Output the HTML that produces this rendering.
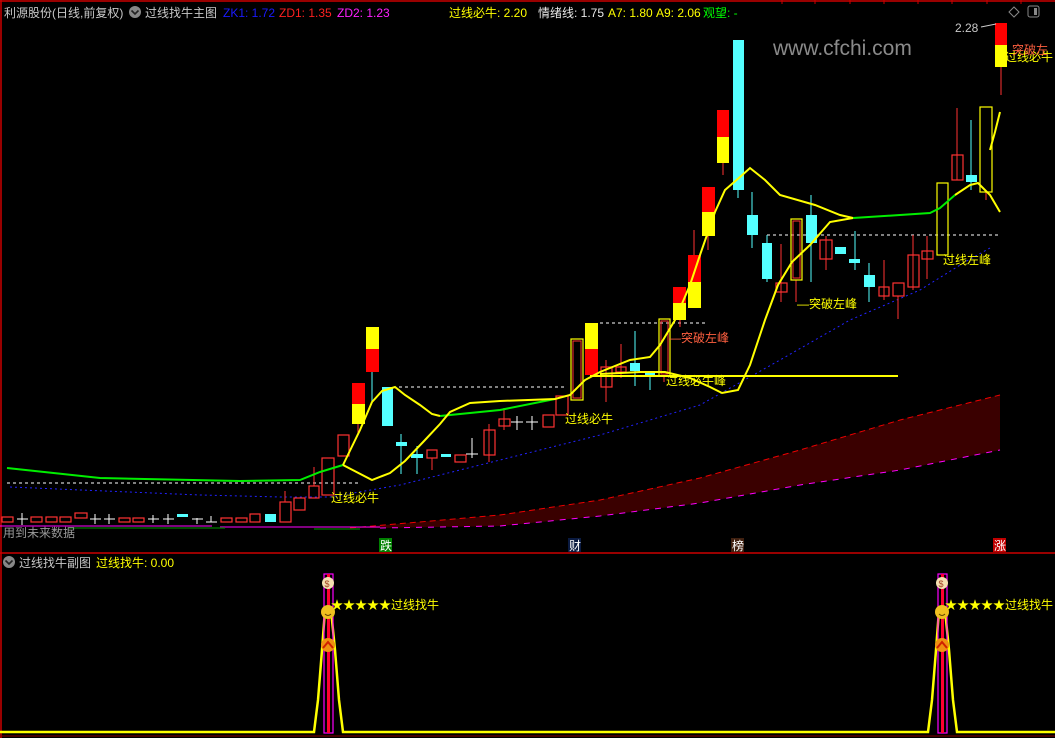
<!DOCTYPE html>
<html><head><meta charset="utf-8"><style>
html,body{margin:0;padding:0;background:#000;}
svg{display:block;font-family:"Liberation Sans","Noto Sans CJK SC",sans-serif;}
</style></head><body>
<svg width="1055" height="738" viewBox="0 0 1055 738" xmlns="http://www.w3.org/2000/svg">
<rect width="1055" height="738" fill="#000"/>
<line x1="0" y1="1" x2="1055" y2="1" stroke="#c00" stroke-width="1.5"/>
<line x1="1" y1="0" x2="1" y2="738" stroke="#c00" stroke-width="1.5"/>
<line x1="0" y1="553" x2="1055" y2="553" stroke="#c00" stroke-width="1.5"/>
<line x1="0" y1="736" x2="1055" y2="736" stroke="#800" stroke-width="1"/>
<g stroke="#c00"><line x1="782" y1="0" x2="782" y2="4"/><line x1="815" y1="0" x2="815" y2="4"/><line x1="850" y1="0" x2="850" y2="4"/><line x1="884" y1="0" x2="884" y2="4"/><line x1="918" y1="0" x2="918" y2="4"/><line x1="952" y1="0" x2="952" y2="4"/><line x1="987" y1="0" x2="987" y2="4"/><line x1="1021" y1="0" x2="1021" y2="4"/></g>

<g font-size="12">
<text x="4" y="17" fill="#c8c8c8">利源股份(日线,前复权)</text>
<text x="145" y="17" fill="#c8c8c8">过线找牛主图</text>
<text x="223" y="17" fill="#1a1aff">ZK1: 1.72</text>
<text x="279" y="17" fill="#ff2020">ZD1: 1.35</text>
<text x="337" y="17" fill="#ff20ff">ZD2: 1.23</text>
<text x="449" y="17" fill="#ffff00">过线必牛: 2.20</text>
<text x="538" y="17" fill="#e8e8e8">情绪线: 1.75</text>
<text x="608" y="17" fill="#ffff00">A7: 1.80</text>
<text x="656" y="17" fill="#ffff00">A9: 2.06</text>
<text x="703" y="17" fill="#00ff00">观望: -</text>
</g>
<circle cx="135" cy="12" r="6" fill="#888"/><path d="M131.5 10.5 L135 14 L138.5 10.5" stroke="#222" stroke-width="1.6" fill="none"/>
<path d="M1014 7 L1019 12 L1014 17 L1009 12 Z" stroke="#888" fill="none"/>
<rect x="1028" y="6" width="11" height="11" rx="2" stroke="#888" fill="none"/><rect x="1034" y="8" width="3" height="7" fill="#888"/>
<text x="773" y="55" font-size="21" fill="#8a8a8a">www.cfchi.com</text>

<polygon points="350,528 500,515 600,500 700,478 800,450 900,420 1000,395 1000,450 900,470 800,485 700,503 600,516 500,526 380,528" fill="#3a0000"/>
<polyline points="350,528 500,515 600,500 700,478 800,450 900,420 1000,395" fill="none" stroke="#e00" stroke-dasharray="6,4"/>
<polyline points="380,528 500,526 600,516 700,503 800,485 900,470 1000,450" fill="none" stroke="#f0f" stroke-dasharray="6,6"/>
<line x1="0" y1="526" x2="212" y2="526" stroke="#f0f"/>
<line x1="220" y1="527" x2="380" y2="527" stroke="#f0f"/>
<line x1="68" y1="528" x2="225" y2="528" stroke="#060" stroke-width="1.5"/>
<line x1="314" y1="529" x2="360" y2="529" stroke="#060" stroke-width="1.5"/>

<g stroke="#fff" stroke-dasharray="3,3">
<line x1="7" y1="483" x2="358" y2="483"/><line x1="393" y1="387" x2="565" y2="387"/>
<line x1="600" y1="323" x2="708" y2="323"/><line x1="767" y1="235" x2="998" y2="235"/>
</g>
<polyline points="10,487 200,495 280,497 330,497 400,485 500,460 600,435 700,405 780,360 850,320 920,290 965,262 990,248" fill="none" stroke="#2222ff" stroke-dasharray="2,3"/>

<g stroke="#ff3232" stroke-width="1">
<line x1="285" y1="491" x2="285" y2="502"/><line x1="314" y1="467" x2="314" y2="486"/>
<line x1="358" y1="424" x2="358" y2="433"/><line x1="432" y1="458" x2="432" y2="470"/>
<line x1="489" y1="424" x2="489" y2="462"/><line x1="504" y1="408" x2="504" y2="430"/>
<line x1="606" y1="360" x2="606" y2="402"/><line x1="621" y1="344" x2="621" y2="378"/>
<line x1="680" y1="320" x2="680" y2="327"/><line x1="694" y1="230" x2="694" y2="255"/>
<line x1="708" y1="235" x2="708" y2="250"/><line x1="723" y1="163" x2="723" y2="175"/>
<line x1="781" y1="244" x2="781" y2="302"/><line x1="796" y1="280" x2="796" y2="302"/>
<line x1="826" y1="236" x2="826" y2="270"/><line x1="884" y1="260" x2="884" y2="300"/>
<line x1="898" y1="296" x2="898" y2="319"/><line x1="913" y1="235" x2="913" y2="290"/>
<line x1="927" y1="236" x2="927" y2="279"/><line x1="957" y1="108" x2="957" y2="180"/>
<line x1="1001" y1="67" x2="1001" y2="95"/><line x1="986" y1="190" x2="986" y2="200"/>
<line x1="664" y1="376" x2="664" y2="382"/>
</g>
<g stroke="#54ffff" stroke-width="1">
<line x1="372" y1="372" x2="372" y2="402"/><line x1="401" y1="434" x2="401" y2="474"/>
<line x1="417" y1="446" x2="417" y2="474"/><line x1="635" y1="331" x2="635" y2="386"/>
<line x1="650" y1="372" x2="650" y2="390"/><line x1="738" y1="190" x2="738" y2="198"/>
<line x1="752" y1="192" x2="752" y2="248"/><line x1="767" y1="235" x2="767" y2="282"/>
<line x1="811" y1="195" x2="811" y2="282"/><line x1="855" y1="231" x2="855" y2="270"/>
<line x1="869" y1="263" x2="869" y2="302"/><line x1="971" y1="120" x2="971" y2="190"/>
</g>
<g stroke="#fff" stroke-width="1">
<line x1="472" y1="438" x2="472" y2="458"/><line x1="466" y1="454" x2="478" y2="454"/>
<line x1="517" y1="416" x2="517" y2="430"/><line x1="511" y1="422" x2="523" y2="422"/>
<line x1="532" y1="416" x2="532" y2="430"/><line x1="526" y1="422" x2="538" y2="422"/>
<line x1="22" y1="513" x2="22" y2="525"/><line x1="17" y1="519" x2="28" y2="519"/>
<line x1="95" y1="514" x2="95" y2="524"/><line x1="90" y1="519" x2="101" y2="519"/>
<line x1="109" y1="514" x2="109" y2="524"/><line x1="104" y1="519" x2="115" y2="519"/>
<line x1="153" y1="515" x2="153" y2="523"/><line x1="148" y1="519" x2="159" y2="519"/>
<line x1="168" y1="514" x2="168" y2="524"/><line x1="163" y1="519" x2="174" y2="519"/>
<line x1="197" y1="518" x2="197" y2="524"/><line x1="192" y1="519" x2="203" y2="519"/>
<line x1="211" y1="516" x2="211" y2="522"/><line x1="206" y1="522" x2="217" y2="522"/>
</g>
<g fill="none" stroke="#ff3232" stroke-width="1.2">
<rect x="2" y="517" width="11" height="5"/><rect x="31" y="517" width="11" height="5"/>
<rect x="46" y="517" width="11" height="5"/><rect x="60" y="517" width="11" height="5"/>
<rect x="75" y="513" width="12" height="5"/><rect x="119" y="518" width="11" height="4"/>
<rect x="133" y="518" width="11" height="4"/><rect x="221" y="518" width="11" height="4"/>
<rect x="236" y="518" width="11" height="4"/><rect x="250" y="514" width="10" height="8"/>
<rect x="280" y="502" width="11" height="20"/><rect x="294" y="498" width="11" height="12"/>
<rect x="309" y="486" width="10" height="12"/><rect x="322" y="458" width="12" height="37"/>
<rect x="338" y="435" width="11" height="21"/><rect x="427" y="450" width="10" height="8"/>
<rect x="455" y="455" width="11" height="7"/><rect x="484" y="430" width="11" height="25"/>
<rect x="499" y="419" width="11" height="7"/><rect x="543" y="415" width="11" height="12"/>
<rect x="556" y="396" width="12" height="19"/><rect x="601" y="367" width="11" height="20"/>
<rect x="616" y="367" width="10" height="5"/><rect x="776" y="283" width="11" height="9"/>
<rect x="820" y="240" width="12" height="19"/><rect x="879" y="287" width="10" height="9"/>
<rect x="893" y="283" width="11" height="13"/><rect x="908" y="255" width="11" height="32"/>
<rect x="922" y="251" width="11" height="8"/><rect x="952" y="155" width="11" height="25"/>
</g>
<g fill="none" stroke="#ffff00" stroke-width="1.2">
<rect x="571" y="339" width="12" height="61"/><rect x="659" y="319" width="11" height="57"/>
<rect x="791" y="219" width="11" height="61"/><rect x="937" y="183" width="11" height="72"/>
<rect x="980" y="107" width="12" height="85"/>
</g>
<g fill="none" stroke="#ff3232" stroke-width="1"><rect x="573" y="341" width="8" height="57"/><rect x="661" y="321" width="7" height="53"/><rect x="793" y="221" width="7" height="57"/></g>
<g fill="#54ffff">
<rect x="177" y="514" width="11" height="3"/><rect x="265" y="514" width="11" height="8"/>
<rect x="382" y="387" width="11" height="39"/><rect x="396" y="442" width="11" height="4"/>
<rect x="411" y="454" width="12" height="4"/><rect x="441" y="454" width="10" height="3"/>
<rect x="630" y="363" width="10" height="8"/><rect x="645" y="372" width="10" height="3"/>
<rect x="733" y="40" width="11" height="150"/><rect x="747" y="215" width="11" height="20"/>
<rect x="762" y="243" width="10" height="36"/><rect x="806" y="215" width="11" height="28"/>
<rect x="835" y="247" width="11" height="7"/><rect x="849" y="259" width="11" height="4"/>
<rect x="864" y="275" width="11" height="12"/><rect x="966" y="175" width="11" height="7"/>
</g>
<rect x="352" y="383" width="13" height="21" fill="#ff0000"/><rect x="352" y="404" width="13" height="20" fill="#ffff00"/>
<rect x="366" y="327" width="13" height="22" fill="#ffff00"/><rect x="366" y="349" width="13" height="23" fill="#ff0000"/>
<rect x="585" y="323" width="13" height="26" fill="#ffff00"/><rect x="585" y="349" width="13" height="26" fill="#ff0000"/>
<rect x="673" y="287" width="13" height="16" fill="#ff0000"/><rect x="673" y="303" width="13" height="17" fill="#ffff00"/>
<rect x="688" y="255" width="13" height="27" fill="#ff0000"/><rect x="688" y="282" width="13" height="26" fill="#ffff00"/>
<rect x="702" y="187" width="13" height="25" fill="#ff0000"/><rect x="702" y="212" width="13" height="24" fill="#ffff00"/>
<rect x="717" y="110" width="12" height="27" fill="#ff0000"/><rect x="717" y="137" width="12" height="26" fill="#ffff00"/>
<rect x="995" y="23" width="12" height="22" fill="#ff0000"/><rect x="995" y="45" width="12" height="22" fill="#ffff00"/>

<g fill="none" stroke-width="2">
<polyline stroke="#00ee00" points="7,468 100,478 240,481 300,480 320,472 343,465"/>
<polyline stroke="#00ee00" points="440,416 500,410 555,399"/>
<polyline stroke="#00ee00" points="853,218 900,215 930,213 940,208 955,195"/>
<polyline stroke="#ffff00" points="343,465 360,430 372,402 382,391 395,387 405,395 420,405 432,414 440,416"/>
<polyline stroke="#ffff00" points="343,465 372,480 390,473 405,461 425,440 440,424 450,412 470,403 500,401 555,399 570,395 585,380 600,372 630,360 650,357 660,345 675,320 690,285 700,255 715,212 725,190 740,177 750,168 765,180 780,195 815,205 840,215 853,218"/>
<polyline stroke="#ffff00" points="600,374 640,372 665,372 690,378 710,387 722,393 738,390 750,365 765,320 778,285 792,262 810,245 830,222 853,218"/>
<polyline stroke="#ffff00" points="955,195 970,185 978,183 990,195 1000,212"/>
<polyline stroke="#ffff00" points="990,150 995,132 1000,112"/>
</g>
<line x1="590" y1="376" x2="898" y2="376" stroke="#ffff00" stroke-width="2"/>

<g font-size="12">
<text x="331" y="502" fill="#ffff00">过线必牛</text>
<text x="565" y="423" fill="#ffff00">过线必牛</text>
<text x="1005" y="61" fill="#ffff00">过线必牛</text>
<text x="1012" y="54" fill="#ff6040">突破左</text>
<text x="669" y="342" fill="#ff6040">—突破左峰</text>
<text x="797" y="308" fill="#ffff00">—突破左峰</text>
<text x="666" y="385" fill="#ffff00">过线必牛峰</text>
<text x="943" y="264" fill="#ffff00">过线左峰</text>
<text x="955" y="32" fill="#c8c8c8">2.28</text>
<text x="3" y="537" fill="#999">用到未来数据</text>
</g>
<line x1="981" y1="27" x2="996" y2="24" stroke="#ccc"/>
<rect x="379" y="538" width="13" height="14" fill="#008000"/><text x="380" y="550" font-size="12" fill="#fff">跌</text>
<rect x="568" y="538" width="13" height="14" fill="#0a1a40"/><text x="569" y="550" font-size="12" fill="#fff">财</text>
<rect x="731" y="538" width="13" height="14" fill="#402010"/><text x="732" y="550" font-size="12" fill="#fff">榜</text>
<rect x="993" y="538" width="13" height="14" fill="#c00000"/><text x="994" y="550" font-size="12" fill="#fff">涨</text>

<circle cx="9" cy="562" r="6" fill="#888"/><path d="M5.5 560.5 L9 564 L12.5 560.5" stroke="#222" stroke-width="1.6" fill="none"/>
<text x="19" y="567" font-size="12" fill="#c8c8c8">过线找牛副图</text>
<text x="96" y="567" font-size="12" fill="#ffff00">过线找牛: 0.00</text>
<polyline fill="none" stroke="#ffff00" stroke-width="2.5" points="0,732 314,732 318,700 322,650 325,610 331,610 335,650 339,700 343,732 928,732 932,700 936,650 939,610 945,610 949,650 953,700 957,732 1055,732"/>
<rect x="324" y="574" width="9" height="159" fill="none" stroke="#ff00ff" stroke-width="1.2"/>
<rect x="327" y="574" width="3" height="159" fill="#ff0030"/>
<rect x="938" y="574" width="9" height="159" fill="none" stroke="#ff00ff" stroke-width="1.2"/>
<rect x="941" y="574" width="3" height="159" fill="#ff0030"/>
<circle cx="328" cy="583" r="6" fill="#f4e0b0"/><text x="324.5" y="587" font-size="9" fill="#a04020">$</text>
<circle cx="328" cy="612" r="7" fill="#f0c020"/><path d="M325 614 Q328 617 331 614" stroke="#604000" fill="none"/>
<circle cx="328" cy="645" r="7" fill="#f09010"/><path d="M323 648 L328 642 L333 648" stroke="#d02000" stroke-width="2" fill="none"/>
<circle cx="942" cy="583" r="6" fill="#f4e0b0"/><text x="938.5" y="587" font-size="9" fill="#a04020">$</text>
<circle cx="942" cy="612" r="7" fill="#f0c020"/><path d="M939 614 Q942 617 945 614" stroke="#604000" fill="none"/>
<circle cx="942" cy="645" r="7" fill="#f09010"/><path d="M937 648 L942 642 L947 648" stroke="#d02000" stroke-width="2" fill="none"/>
<text x="331" y="609" font-size="12" fill="#ffff00">★★★★★过线找牛</text>
<text x="945" y="609" font-size="12" fill="#ffff00">★★★★★过线找牛</text>
</svg>
</body></html>
